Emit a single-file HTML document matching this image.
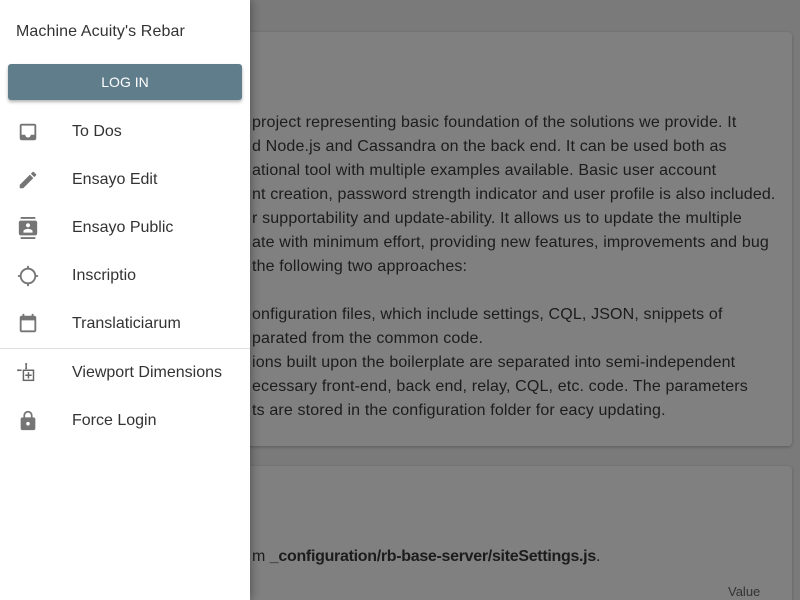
<!DOCTYPE html>
<html style="overflow:hidden;height:600px"><head><style>
body{margin:0;width:800px;height:600px;overflow:hidden;background:#7a7a7a;font-family:"Liberation Sans",sans-serif;position:relative}
.card{position:absolute;left:0;width:792px;background:#808080;border-radius:4px;box-shadow:0 1px 3px rgba(0,0,0,.25)}
.txt{position:absolute;left:0;font-size:16px;color:#1c1c1c;white-space:nowrap;line-height:24px;letter-spacing:0.15px}
.drawer{position:absolute;left:0;top:0;width:250px;height:600px;background:#fff;box-shadow:2px 0 8px rgba(0,0,0,.3)}
.item{position:absolute;left:0;width:250px;height:48px}
.item svg{position:absolute;left:17px;top:14px;width:22px;height:22px;fill:#757575}
.item span{position:absolute;left:72px;top:0;line-height:50px;font-size:16px;color:#333}
</style></head><body>
<div class="card" style="top:32px;height:414px"></div>
<div class="card" style="top:466px;height:134px;border-radius:4px 4px 0 0"></div>
<div class="txt" style="top:111px;left:0">
<div style="padding-left:252px">project representing basic foundation of the solutions we provide. It</div>
<div style="padding-left:252px">d Node.js and Cassandra on the back end. It can be used both as</div>
<div style="padding-left:252px">ational tool with multiple examples available. Basic user account</div>
<div style="padding-left:252px">nt creation, password strength indicator and user profile is also included.</div>
<div style="padding-left:252px">r supportability and update-ability. It allows us to update the multiple</div>
<div style="padding-left:252px">ate with minimum effort, providing new features, improvements and bug</div>
<div style="padding-left:252px">the following two approaches:</div>
<div>&nbsp;</div>
<div style="padding-left:252px">onfiguration files, which include settings, CQL, JSON, snippets of</div>
<div style="padding-left:252px">parated from the common code.</div>
<div style="padding-left:252px">ions built upon the boilerplate are separated into semi-independent</div>
<div style="padding-left:252px">ecessary front-end, back end, relay, CQL, etc. code. The parameters</div>
<div style="padding-left:252px">ts are stored in the configuration folder for eacy updating.</div>
</div>
<div class="txt" style="top:545px;left:252px;letter-spacing:0">m <b style="letter-spacing:-0.3px">_configuration/rb-base-server/siteSettings.js</b>.</div>
<div class="txt" style="top:582px;left:728px;font-size:13px;color:#333;line-height:20px;letter-spacing:0">Value</div>
<div class="drawer">
<div style="position:absolute;left:16px;top:23px;font-size:16px;color:#333;letter-spacing:0.1px">Machine Acuity's Rebar</div>
<div style="position:absolute;left:8px;top:64px;width:234px;height:36px;background:#607d8b;border-radius:3px;box-shadow:0 2px 3px rgba(0,0,0,.3);color:#fff;font-size:14px;text-align:center;line-height:36px">LOG IN</div>
<div class="item" style="top:107px"><svg viewBox="0 0 24 24"><path d="M19 3H5c-1.1 0-2 .9-2 2v14c0 1.1.9 2 2 2h14c1.1 0 2-.9 2-2V5c0-1.1-.9-2-2-2zm0 12h-4c0 1.66-1.35 3-3 3s-3-1.34-3-3H5V5h14v10z"/></svg><span>To Dos</span></div>
<div class="item" style="top:155px"><svg viewBox="0 0 24 24"><path d="M3 17.25V21h3.75L17.81 9.94l-3.75-3.75L3 17.25zM20.71 7.04a1 1 0 000-1.41l-2.34-2.34a1 1 0 00-1.41 0l-1.83 1.83 3.75 3.75 1.830-1.83z"/></svg><span>Ensayo Edit</span></div>
<div class="item" style="top:203px"><svg viewBox="0 0 24 24"><path d="M20 0H4v2h16V0zM4 24h16v-2H4v2zM20 4H4c-1.1 0-2 .9-2 2v12c0 1.1.9 2 2 2h16c1.1 0 2-.9 2-2V6c0-1.1-.9-2-2-2zm-8 2.75c1.24 0 2.25 1.01 2.25 2.25s-1.01 2.25-2.25 2.25S9.75 10.24 9.75 9 10.76 6.75 12 6.75zM17 17H7v-1.5c0-1.67 3.33-2.5 5-2.5s5 .83 5 2.5V17z"/></svg><span>Ensayo Public</span></div>
<div class="item" style="top:251px"><svg viewBox="0 0 24 24"><path d="M20.94 11A8.994 8.994 0 0013 3.06V1h-2v2.06A8.994 8.994 0 003.06 11H1v2h2.06A8.994 8.994 0 0011 20.94V23h2v-2.06A8.994 8.994 0 0020.94 13H23v-2h-2.06zM12 19c-3.87 0-7-3.13-7-7s3.13-7 7-7 7 3.13 7 7-3.13 7-7 7z"/></svg><span>Inscriptio</span></div>
<div class="item" style="top:299px"><svg viewBox="0 0 24 24"><path d="M19 3h-1V1h-2v2H8V1H6v2H5c-1.11 0-2 .9-2 2v14c0 1.1.89 2 2 2h14c1.1 0 2-.9 2-2V5c0-1.1-.9-2-2-2zm0 16H5V8h14v11z"/></svg><span>Translaticiarum</span></div>
<div style="position:absolute;left:0;top:348px;width:250px;height:1px;background:#e0e0e0"></div>
<div class="item" style="top:348px"><svg viewBox="0 0 24 24" style="fill:none;stroke:#666;stroke-width:1.6"><rect x="7" y="9" width="11" height="11"/><path d="M12.5 11v7M9 14.5h7M1 9h4M1 8v2M9 2h2M10 2v5M9 7h2"/></svg><span>Viewport Dimensions</span></div>
<div class="item" style="top:396px"><svg viewBox="0 0 24 24"><path d="M18 8h-1V6c0-2.76-2.24-5-5-5S7 3.24 7 6v2H6c-1.1 0-2 .9-2 2v10c0 1.1.9 2 2 2h12c1.1 0 2-.9 2-2V10c0-1.1-.9-2-2-2zm-6 9c-1.1 0-2-.9-2-2s.9-2 2-2 2 .9 2 2-.9 2-2 2zm3.1-9H8.9V6c0-1.71 1.39-3.1 3.1-3.1 1.71 0 3.1 1.39 3.1 3.1v2z"/></svg><span>Force Login</span></div>
</div>
</body></html>
